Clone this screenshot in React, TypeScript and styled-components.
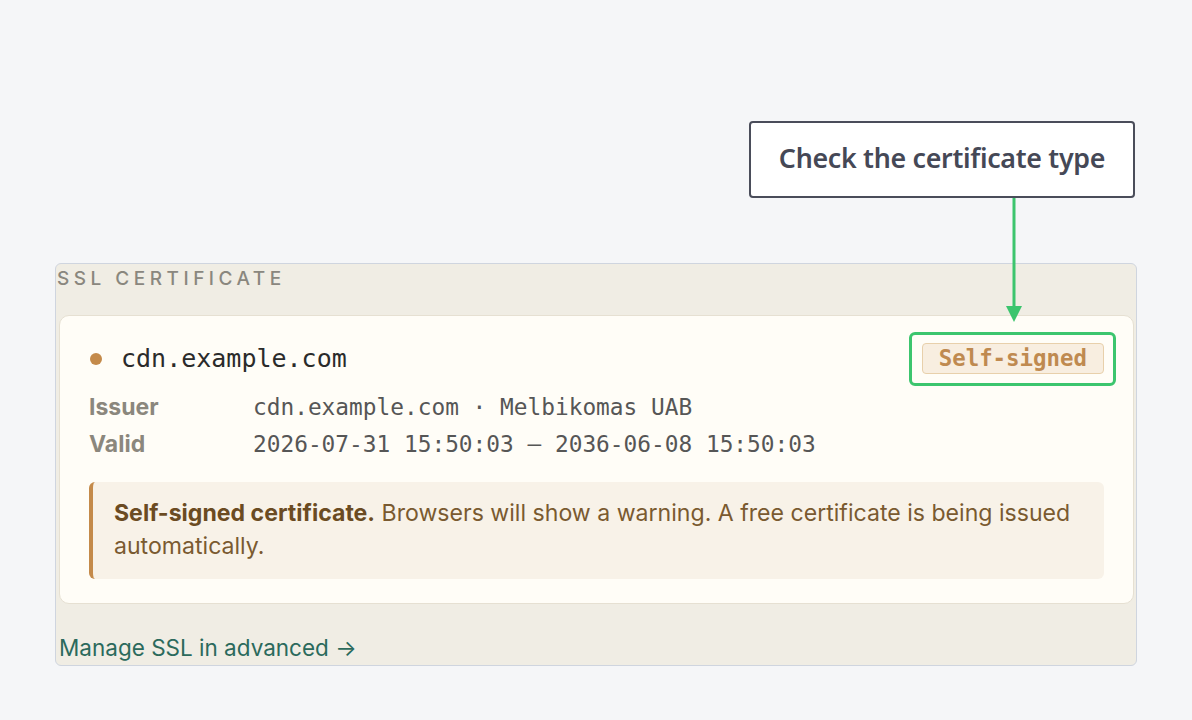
import * as React from 'react'
import styled, { createGlobalStyle } from 'styled-components'

const GlobalStyle = createGlobalStyle`
  html, body {
    margin: 0;
    padding: 0;
    background: #f5f6f8;
  }
  body {
    font-family: Inter, "Noto Sans", sans-serif;
  }
`

const MONO = '"DejaVu Sans Mono", "Liberation Mono", monospace'

const Page = styled.div`
  position: relative;
  width: 1192px;
  height: 720px;
  box-sizing: border-box;
  padding: 263px 55px 0;
`

const Callout = styled.div`
  position: absolute;
  left: 749px;
  top: 121px;
  width: 386px;
  height: 77px;
  box-sizing: border-box;
  padding-bottom: 4px;
  border: 2px solid #4a4d5a;
  border-radius: 4px;
  background: #ffffff;
  display: flex;
  align-items: center;
  justify-content: center;
  font-family: "Noto Sans", sans-serif;
  font-weight: 600;
  font-size: 26.8px;
  letter-spacing: -0.3px;
  color: #454856;
`

const Arrow = styled.svg`
  position: absolute;
  left: 1004px;
  top: 198px;
`

const Panel = styled.section`
  border: 1px solid #cfd5df;
  border-radius: 6px;
  background: #f0ede4;
  padding: 0 2px 3px 3px;
`

const Heading = styled.div`
  font-family: Inter, sans-serif;
  font-size: 19px;
  font-weight: 500;
  letter-spacing: 4.5px;
  color: #8a877e;
  line-height: 28px;
  margin: 1px 0 22px -2px;
`

const Card = styled.div`
  background: #fffdf7;
  border: 1px solid #e6e0d2;
  border-radius: 10px;
  padding: 27px 29px 24px 29px;
`

const TopRow = styled.div`
  display: flex;
  align-items: center;
  justify-content: space-between;
  margin-bottom: 15px;
`

const Domain = styled.div`
  display: flex;
  align-items: center;
  gap: 19px;
  font-family: ${MONO};
  font-size: 25px;
  color: #2b2b2b;
  padding-left: 1px;
`

const Dot = styled.span`
  width: 12px;
  height: 12px;
  border-radius: 50%;
  background: #c48a4a;
`

const BadgeWrap = styled.div`
  position: relative;
`

const Badge = styled.span`
  display: inline-block;
  box-sizing: border-box;
  height: 31px;
  line-height: 29px;
  padding: 0 16px;
  border: 1px solid #e8d0ab;
  border-radius: 4px;
  background: #f8eee0;
  font-family: ${MONO};
  font-weight: 700;
  font-size: 22.4px;
  color: #bf8a50;
`

const Highlight = styled.span`
  position: absolute;
  inset: -11px -12px -12px -13px;
  border: 3px solid #3cc56e;
  border-radius: 6px;
  pointer-events: none;
`

const Details = styled.dl`
  display: grid;
  grid-template-columns: 164px 1fr;
  margin: 0;
  line-height: 37px;
`

const Label = styled.dt`
  font-family: Inter, sans-serif;
  font-weight: 700;
  font-size: 23px;
  color: #8b877d;
`

const Value = styled.dd`
  margin: 0;
  font-family: ${MONO};
  font-size: 22.8px;
  color: #565656;
`

const Notice = styled.div`
  margin-top: 19px;
  background: #f8f2e8;
  border-left: 4px solid #c48a4a;
  border-radius: 6px;
  padding: 15px 21px 16px 21px;
  font-family: Inter, sans-serif;
  font-size: 23.1px;
  line-height: 33px;
  color: #7a5a30;

  strong {
    font-weight: 700;
    color: #6b4b22;
  }
`

const ManageLink = styled.a`
  display: block;
  margin-top: 30px;
  font-family: Inter, sans-serif;
  font-size: 22.5px;
  line-height: 28px;
  color: #2b6a5c;
  text-decoration: none;
`

export default function App() {
  return (
    <Page>
      <GlobalStyle />
      <Callout>Check the certificate type</Callout>
      <Arrow width="20" height="126" viewBox="0 0 20 126">
        <line x1="10" y1="0" x2="10" y2="112" stroke="#3cc56e" strokeWidth="3" />
        <polygon points="2,108 18,108 10,124" fill="#3cc56e" />
      </Arrow>
      <Panel>
        <Heading>SSL CERTIFICATE</Heading>
        <Card>
          <TopRow>
            <Domain>
              <Dot />
              cdn.example.com
            </Domain>
            <BadgeWrap>
              <Badge>Self-signed</Badge>
              <Highlight />
            </BadgeWrap>
          </TopRow>
          <Details>
            <Label>Issuer</Label>
            <Value>cdn.example.com · Melbikomas UAB</Value>
            <Label>Valid</Label>
            <Value>2026-07-31 15:50:03 — 2036-06-08 15:50:03</Value>
          </Details>
          <Notice>
            <strong>Self-signed certificate.</strong> Browsers will show a warning. A free certificate is being issued automatically.
          </Notice>
        </Card>
        <ManageLink href="#">Manage SSL in advanced →</ManageLink>
      </Panel>
    </Page>
  )
}
